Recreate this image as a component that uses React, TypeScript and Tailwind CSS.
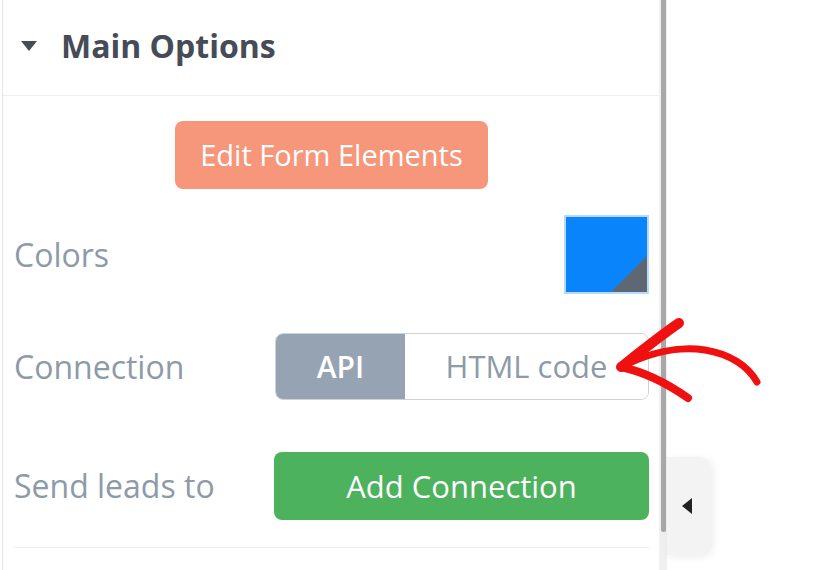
import React from "react";

function Arrow() {
  return (
    <svg
      className="absolute left-0 top-0 pointer-events-none"
      width="818"
      height="570"
      viewBox="0 0 818 570"
      fill="none"
    >
      <g stroke="#f01010" strokeLinecap="round" strokeLinejoin="round">
        <path d="M679 323 C 660 336, 640 352, 621 367" strokeWidth="10" />
        <path d="M621 367 C 645 372, 668 384, 688 398" strokeWidth="8" />
        <path d="M621 367 C 650 352, 680 346, 705 350 C 730 354, 748 366, 757 382" strokeWidth="7" />
      </g>
    </svg>
  );
}

export default function App() {
  return (
    <div
      className="relative w-[818px] h-[570px] overflow-hidden bg-white flex"
      style={{ fontFamily: "'Open Sans', Roboto, sans-serif" }}
    >
      {/* PANEL */}
      <div className="w-[657px] h-full ml-[2px] border-l border-[#e2e5e8] bg-white flex flex-col">
        {/* HEADER */}
        <div className="h-[96px] border-b border-[#eceef0] flex items-center pl-[18px] pb-[4px]">
          <svg width="16" height="10" viewBox="0 0 16 10" className="mr-[24px]">
            <path d="M0 0 H16 L8 10 Z" fill="#454b57" />
          </svg>
          <span className="text-[32px] font-bold text-[#454b57]">Main Options</span>
        </div>

        {/* BODY */}
        <div className="pl-[11px] pr-[10px] pt-[25px] flex flex-col">
          <div className="flex justify-center">
            <button className="w-[313px] h-[68px] rounded-[8px] bg-[#f6967a] text-white text-[29px]">
              Edit Form Elements
            </button>
          </div>

          <div className="mt-[26px] flex items-center justify-between h-[79px]">
            <span className="text-[32px] text-[#8d9aa8]">Colors</span>
            <div className="relative w-[85px] h-[79px] border-2 border-[#b5d9ff] bg-[#0a84fb] overflow-hidden">
              <svg className="absolute right-0 bottom-0" width="36" height="36" viewBox="0 0 36 36">
                <path d="M36 0 V36 H0 Z" fill="#5e6872" />
              </svg>
            </div>
          </div>

          <div className="mt-[39px] flex items-center justify-between h-[67px]">
            <span className="text-[32px] text-[#8d9aa8]">Connection</span>
            <div className="w-[374px] h-[67px] rounded-[8px] border border-[#cfd3d8] overflow-hidden flex">
              <div className="w-[129px] bg-[#95a3b3] flex items-center justify-center text-white text-[30px] font-semibold">
                API
              </div>
              <div className="flex-1 bg-white flex items-center justify-center text-[#8d9aa8] text-[31px]">
                HTML code
              </div>
            </div>
          </div>

          <div className="mt-[52px] flex items-center justify-between h-[68px]">
            <span className="text-[32px] text-[#8d9aa8]">Send leads to</span>
            <button className="w-[375px] h-[68px] rounded-[8px] bg-[#4cb25d] text-white text-[31px]">
              Add Connection
            </button>
          </div>

          <div className="mt-[27px] border-t border-[#eceef0]" />
        </div>
      </div>

      {/* SCROLLBAR */}
      <div className="w-[8px] h-full bg-[#f0f0f0] flex flex-col">
        <div className="w-[5px] h-[532px] ml-[2px] bg-[#a8a8a8] rounded-b-[2px]" />
      </div>

      {/* RIGHT SIDE */}
      <div className="flex-1 h-full bg-white">
        <div className="mt-[457px] w-[44px] h-[98px] rounded-r-[12px] bg-[#f3f3f3] shadow-[2px_2px_8px_rgba(0,0,0,0.08)] flex items-center justify-center">
          <svg width="10" height="16" viewBox="0 0 10 16" className="mr-[4px]">
            <path d="M10 0 V16 L0 8 Z" fill="#222" />
          </svg>
        </div>
      </div>

      <Arrow />
    </div>
  );
}
